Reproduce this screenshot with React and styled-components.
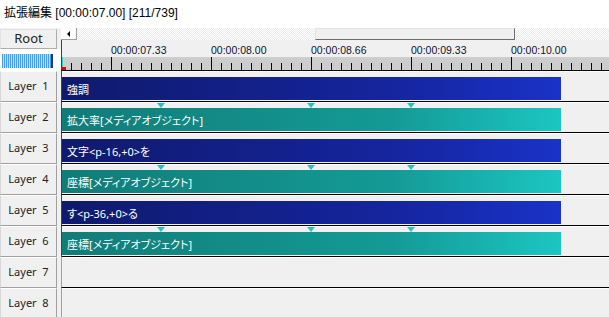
import React from 'react';
import styled, { createGlobalStyle } from 'styled-components';

const GlobalStyle = createGlobalStyle`
  html, body { margin: 0; padding: 0; background: #f0f0f0; }
  body { font-family: "Noto Sans", "Noto Sans CJK JP", sans-serif; }
`;

const Page = styled.div`
  width: 609px;
  height: 317px;
  overflow: hidden;
  background: #f0f0f0;
  display: flex;
  flex-direction: column;
`;

const TitleBar = styled.div`
  height: 28px;
  flex-shrink: 0;
  background: #fff;
  padding: 5px 0 0 4px;
  box-sizing: border-box;
  font-family: "Liberation Sans", "Noto Sans CJK JP", sans-serif;
  font-size: 12px;
  line-height: 16px;
  color: #000;
`;

const Body = styled.div`
  display: flex;
  flex: 1;
`;

const LeftPanel = styled.div`
  width: 61px;
  flex-shrink: 0;
  display: flex;
  flex-direction: column;
`;

const RootButton = styled.div`
  width: 57px;
  height: 20px;
  margin-top: 1px;
  box-sizing: border-box;
  border: 1px solid #adadad;
  border-top-color: #e3e3e3;
  border-left-color: #e3e3e3;
  background: #f0f0f0;
  font-size: 13px;
  line-height: 17px;
  text-align: center;
  color: #222;
`;

const MeterArea = styled.div`
  height: 22px;
  background: #fff;
  padding: 5px 0 0 2px;
  box-sizing: border-box;
`;

const Meter = styled.div`
  width: 51px;
  height: 14px;
  background:
    linear-gradient(to right, transparent 49px, #1a3a7a 49px),
    repeating-linear-gradient(to right, #4a9ff0 0 1px, #b9dcff 1px 2px);
`;

const LayerButton = styled.div`
  width: 57px;
  height: 31px;
  box-sizing: border-box;
  border: 1px solid #a0a0a0;
  border-top-color: #fff;
  border-left-color: #d8d8d8;
  background: #f0f0f0;
  font-size: 11px;
  line-height: 28px;
  text-align: center;
  white-space: pre;
  color: #222;
`;

const Timeline = styled.div`
  flex: 1;
  display: flex;
  flex-direction: column;
`;

const ScrollRow = styled.div`
  height: 12px;
  display: flex;
  background: repeating-conic-gradient(#fff 0 25%, #ebebeb 0 50%) 0 0 / 2px 2px;
`;

const ArrowButton = styled.div`
  width: 16px;
  height: 12px;
  box-sizing: border-box;
  background: #fff;
  border-right: 1px solid #a0a0a0;
  border-bottom: 1px solid #a0a0a0;
  display: flex;
  align-items: center;
  justify-content: center;
  &::before {
    content: "";
    border-top: 3px solid transparent;
    border-bottom: 3px solid transparent;
    border-right: 3px solid #000;
  }
`;

const ScrollSpacer = styled.div`
  width: ${p => p.$w}px;
`;

const Thumb = styled.div`
  width: 200px;
  height: 12px;
  box-sizing: border-box;
  background: #f0f0f0;
  border: 1px solid #e3e3e3;
  border-right-color: #6d6d6d;
  border-bottom-color: #6d6d6d;
`;

const Ruler = styled.div`
  height: 30px;
  display: flex;
  flex-direction: column;
  border-left: 1px solid #e00000;
`;

const RulerLabels = styled.div`
  height: 17px;
  display: flex;
  padding-left: 49px;
  background: #f0f0f0;
`;

const RulerLabel = styled.div`
  width: 100px;
  flex-shrink: 0;
  font-family: "Liberation Sans", sans-serif;
  font-size: 10.5px;
  line-height: 17px;
  padding-top: 2px;
  color: #101030;
`;

const TickBand = styled.div`
  height: 13px;
  background: #cdcdcd;
  display: flex;
`;

const TrackRow = styled.div`
  height: 31px;
  box-sizing: border-box;
  border-top: 1px solid #000;
  border-left: 1px solid ${p => (p.$cursor ? '#e00000' : '#2ad4d4')};
  padding-top: 6px;
  position: relative;
  box-shadow: inset 0 1px 0 #fff;
`;

const Clip = styled.div`
  width: 499px;
  height: 23px;
  box-sizing: border-box;
  padding-left: 5px;
  display: flex;
  align-items: center;
  font-family: "Noto Sans", "Noto Sans CJK JP", sans-serif;
  font-feature-settings: "palt";
  font-size: 11px;
  color: #fff;
  white-space: pre;
  background: ${p =>
    p.$kind === 'filter'
      ? 'linear-gradient(to right, #117c78 0%, #149a96 66%, #1bc6c2 100%)'
      : 'linear-gradient(to right, #0f1a6c 0%, #15259e 66%, #1a32c8 100%)'};
`;

const Marker = styled.div`
  position: absolute;
  top: 1px;
  width: 0;
  height: 0;
  border-left: 4.5px solid transparent;
  border-right: 4.5px solid transparent;
  border-top: 5px solid #1ec4c8;
`;

const Ticks = () => {
  const lines = [];
  for (let x = 9; x < 548; x += 10) {
    const major = (x - 49) % 100 === 0;
    lines.push(<line key={x} x1={x + 0.5} x2={x + 0.5} y1={major ? 0 : 6} y2={13} stroke="#000" />);
  }
  return (
    <svg width="547" height="13">
      {lines}
      <line x1="0.5" x2="0.5" y1="0" y2="10" stroke="#2ad4d4" />
      <rect x="0" y="10" width="4" height="3" fill="#e00000" />
    </svg>
  );
};

const labels = ['00:00:07.33', '00:00:08.00', '00:00:08.66', '00:00:09.33', '00:00:10.00'];

const tracks = [
  { text: '強調', kind: 'object' },
  { text: '拡大率[メディアオブジェクト]', kind: 'filter', markers: true },
  { text: '文字<p-16,+0>を', kind: 'object' },
  { text: '座標[メディアオブジェクト]', kind: 'filter', markers: true },
  { text: 'す<p-36,+0>る', kind: 'object' },
  { text: '座標[メディアオブジェクト]', kind: 'filter', markers: true },
  {},
  {},
];

const markerSpots = [95, 245, 345];

export default function App() {
  return (
    <Page>
      <GlobalStyle />
      <TitleBar>拡張編集 [00:00:07.00] [211/739]</TitleBar>
      <Body>
        <LeftPanel>
          <RootButton>Root</RootButton>
          <MeterArea>
            <Meter />
          </MeterArea>
          {tracks.map((_, i) => (
            <LayerButton key={i}>{`Layer  ${i + 1}`}</LayerButton>
          ))}
        </LeftPanel>
        <Timeline>
          <ScrollRow>
            <ArrowButton />
            <ScrollSpacer $w={238} />
            <Thumb />
          </ScrollRow>
          <Ruler>
            <RulerLabels>
              {labels.map(l => (
                <RulerLabel key={l}>{l}</RulerLabel>
              ))}
            </RulerLabels>
            <TickBand>
              <Ticks />
            </TickBand>
          </Ruler>
          {tracks.map((t, i) => (
            <TrackRow key={i} $cursor={i < 6}>
              {t.markers && markerSpots.map(m => <Marker key={m} style={{ left: m }} />)}
              {t.text && <Clip $kind={t.kind}>{t.text}</Clip>}
            </TrackRow>
          ))}
        </Timeline>
      </Body>
    </Page>
  );
}
